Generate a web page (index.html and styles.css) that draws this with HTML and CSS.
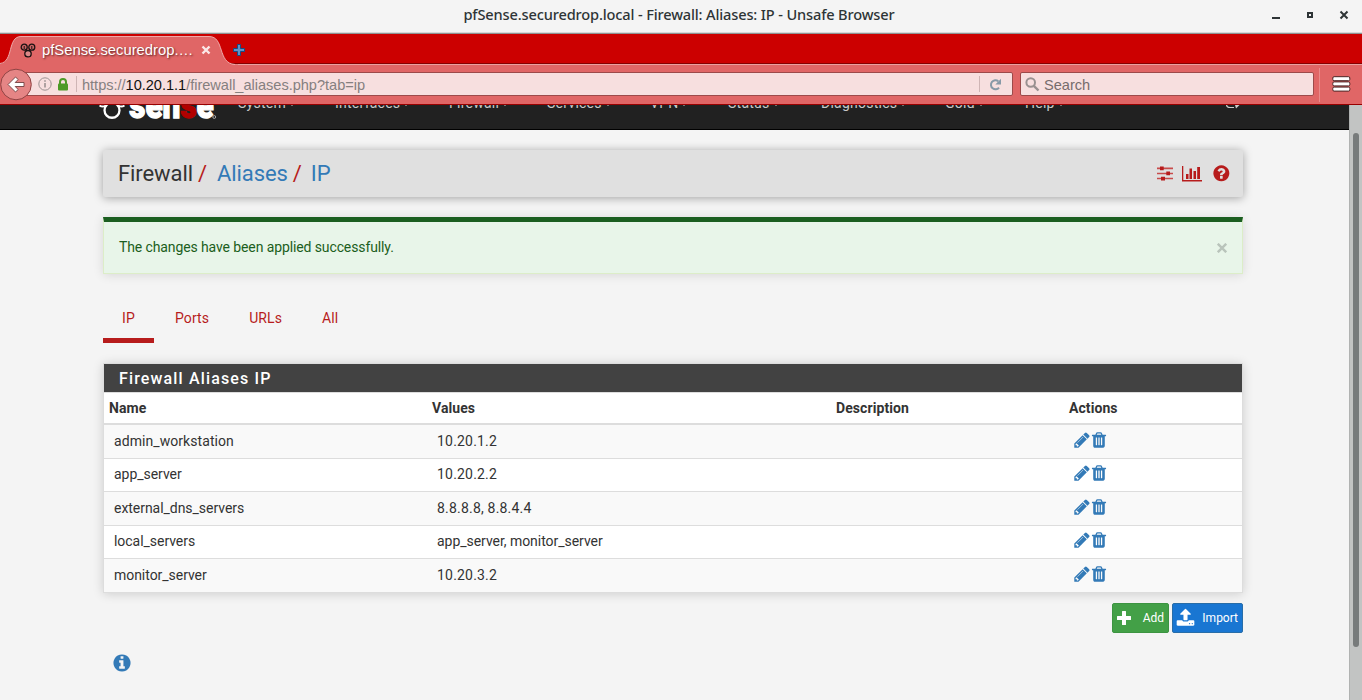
FILE: index.html
```
<!DOCTYPE html>
<html lang="en">
<head>
<meta charset="utf-8">
<title>pfSense.securedrop.local - Firewall: Aliases: IP</title>
<link rel="stylesheet" href="styles.css">
</head>
<body>
<svg class="defs" width="0" height="0">
  <symbol id="pencil" viewBox="0 0 1792 1792"><path d="M491 1536l91-91-235-235-91 91v107h128v128h107zm523-928q0-22-22-22-10 0-17 7l-542 542q-7 7-7 17 0 22 22 22 10 0 17-7l542-542q7-7 7-17zm-54-192l416 416-832 832h-416v-416zm683 96q0 53-37 90l-166 166-416-416 166-165q36-38 90-38 53 0 91 38l235 234q37 39 37 91z"/></symbol>
  <symbol id="trash" viewBox="0 0 1792 1792"><path d="M704 1376v-704q0-14-9-23t-23-9h-64q-14 0-23 9t-9 23v704q0 14 9 23t23 9h64q14 0 23-9t9-23zm256 0v-704q0-14-9-23t-23-9h-64q-14 0-23 9t-9 23v704q0 14 9 23t23 9h64q14 0 23-9t9-23zm256 0v-704q0-14-9-23t-23-9h-64q-14 0-23 9t-9 23v704q0 14 9 23t23 9h64q14 0 23-9t9-23zm-544-992h448l-48-117q-7-9-17-11h-317q-10 2-17 11zm928 32v64q0 14-9 23t-23 9h-96v948q0 83-47 143.5t-113 60.5h-832q-66 0-113-58.5t-47-141.5v-952h-96q-14 0-23-9t-9-23v-64q0-14 9-23t23-9h309l70-167q15-37 54-63t79-26h320q40 0 79 26t54 63l70 167h309q14 0 23 9t9 23z"/></symbol>
</svg>

<header class="titlebar">
  <div class="window-title">pfSense.securedrop.local - Firewall: Aliases: IP - Unsafe Browser</div>
  <svg class="window-buttons" width="80" height="14" viewBox="0 0 80 14" fill="none" stroke="#2e3436">
    <path d="M2 10h8" stroke-width="2"/><rect x="38" y="5" width="4" height="4" stroke-width="2"/>
    <path d="M70.5 3.500l7 7m0-7l-7 7" stroke-width="2"/>
  </svg>
</header>

<div class="tabstrip">
  <svg class="tab-shape" width="238" height="31" viewBox="0 0 238 31">
    <path class="tab-fill" d="M0 30C14 28 7 2.500 21 2.500H209C225 2.500 217 29.500 235 30.500H238V31H0Z"/>
    <path class="tab-edge" d="M0 29.500C14 28 7 2.500 21 2.500H209C225 2.500 217 29.500 235 30.500"/>
  </svg>
  <div class="tab-content">
    <svg width="16" height="15" viewBox="0 0 16 15" fill="#c66" stroke="#1b1111" stroke-width="1.300"><circle cx="4.200" cy="4.200" r="3"/><circle cx="11.800" cy="4.200" r="3"/><circle cx="8" cy="10.700" r="3.200" fill="#d88"/><path d="M4.200 3v3M11.800 3v3" stroke-width="1"/></svg>
    <span class="tab-title">pfSense.securedrop.…</span>
    <svg width="10" height="10" viewBox="0 0 10 10" stroke="#fbe9e9" stroke-width="2.400"><path d="M1.500 1.500l7 7m0-7l-7 7"/></svg>
  </div>
  <svg class="new-tab" width="12" height="12" viewBox="0 0 12 12"><path d="M4.500.5h3v4h4v3h-4v4h-3v-4h-4v-3h4z" fill="#5d94c9" stroke="#174b84"/></svg>
</div>

<div class="toolbar">
  <svg class="back" width="33" height="33" viewBox="0 0 33 33"><circle cx="16" cy="16.500" r="15.300" fill="#e58585" stroke="#8f4343"/><path d="M8 16.500l7.500-7.500 2.700 2.500-3 3H24v4h-8.800l3 3-2.700 2.500z" fill="#fff" stroke="#714040" stroke-width=".9"/></svg>
  <div class="urlbar">
    <svg width="14" height="14" viewBox="0 0 14 14" fill="none" stroke="#9c9292"><circle cx="7" cy="7" r="6.200"/><path d="M7 6v4.500M7 3.200v1.600" stroke-width="1.600"/></svg>
    <svg class="lock" width="12" height="13" viewBox="0 0 12 13"><path d="M3 6V4a3 3 0 016 0v2" fill="none" stroke="#4d9a26" stroke-width="2"/><rect x="1" y="5.500" width="10" height="7" rx="1" fill="#4d9a26"/></svg>
    <span class="divider"></span>
    <span class="url">https://<b>10.20.1.1</b>/firewall_aliases.php?tab=ip</span>
    <span class="divider"></span>
    <svg class="reload" width="13" height="13" viewBox="0 0 13 13"><path d="M10 9.600A4.500 4.500 0 119.300 3.300" fill="none" stroke="#8799a7" stroke-width="2"/><path d="M12 .8v5.700H6.300z" fill="#8799a7"/></svg>
  </div>
  <div class="search">
    <svg width="15" height="15" viewBox="0 0 15 15" fill="none" stroke="#999090"><circle cx="5.700" cy="5.500" r="4.300" stroke-width="2"/><path d="M8.800 8.800l4.700 4.700" stroke-width="2.400"/></svg>
    <span>Search</span>
  </div>
  <span class="tool-sep"></span>
  <svg class="menu" width="19" height="16" viewBox="0 0 19 16" fill="#fff" stroke="#4b2525"><rect x=".8" y=".7" width="17" height="4" rx="1.300"/><rect x=".8" y="5.900" width="17" height="4" rx="1.300"/><rect x=".8" y="11.100" width="17" height="4" rx="1.300"/></svg>
</div>

<div class="viewport">
  <div class="page">
    <nav class="navbar">
      <svg class="logo" width="124" height="25" viewBox="0 0 124 25">
        <circle cx="12" cy="5.500" r="7.800" fill="none" stroke="#fff" stroke-width="2.400"/>
        <path d="M-1 .5q3 2 6 .5M25 .5q-3 2-6 .5" fill="none" stroke="#fff" stroke-width="2"/>
        <text x="30" y="13.500" textLength="88" lengthAdjust="spacingAndGlyphs">sen<tspan class="red">s</tspan>e</text>
        <circle cx="118.500" cy="12.500" r="1.500" fill="none" stroke="#aaa"/>
      </svg>
      <ul class="nav-items">
        <li class="n-system">System</li><li class="n-interfaces">Interfaces</li><li class="n-firewall">Firewall</li><li class="n-services">Services</li><li class="n-vpn">VPN</li><li class="n-status">Status</li><li class="n-diagnostics">Diagnostics</li><li class="n-gold">Gold</li><li class="n-help">Help</li>
      </ul>
      <svg class="logout" width="15" height="5" viewBox="0 0 15 5"><path d="M.5 0Q1 2.500 4 2.500h4" fill="none" stroke="#ccc" stroke-width="1.200"/><path d="M9 0h4.500L10 3.500z" fill="#ccc"/></svg>
    </nav>

    <main class="container">
      <header class="page-header">
        <div class="crumbs"><span>Firewall</span><i>/</i><a>Aliases</a><i>/</i><a>IP</a></div>
        <div class="header-icons">
          <svg width="16" height="15" viewBox="0 0 16 15"><path d="M0 2.300h16M0 7.500h16M0 12.500h16" stroke="#c84b4b" stroke-width="1.700"/><path d="M3 .5h3.700v3.700H3zM9.300 5.600H13v3.700H9.300zM4 10.700h4v3.700H4z" fill="#b71c1c"/></svg>
          <svg class="bars" width="21" height="16" viewBox="0 0 21 16" fill="#b71c1c"><path d="M0 0h1.300v14H20v1.500H0zM4 8h2.500v5H4zM7.500 2.500H10V13H7.500zM11.500 5H14v8h-2.500zM15.200 1H18v12h-2.800z"/></svg>
          <svg width="18.700" height="18.700" viewBox="0 0 1792 1792" fill="#b71c1c"><path d="M1024 1376v-192q0-14-9-23t-23-9h-192q-14 0-23 9t-9 23v192q0 14 9 23t23 9h192q14 0 23-9t9-23zm256-672q0-88-55.500-163t-138.500-116-170-41q-243 0-371 213-15 24 8 42l132 100q7 6 19 6 16 0 25-12 53-68 86-92 34-24 86-24 48 0 85.500 26t37.500 59q0 38-20 61t-68 45q-63 28-115.500 86.500t-52.500 125.500v36q0 14 9 23t23 9h192q14 0 23-9t9-23q0-19 21.500-49.500t54.500-49.500q32-18 49-28.500t46-35 44.500-48 28-60.500 12.500-81zm384 192q0 209-103 385.500t-279.500 279.500-385.500 103-385.500-103-279.500-279.500-103-385.500 103-385.500 279.500-279.500 385.500-103 385.500 103 279.500 279.500 103 385.500z"/></svg>
        </div>
      </header>

      <div class="alert"><span>The changes have been applied successfully.</span><svg width="10" height="10" viewBox="0 0 9 9" stroke="#b9c4bb" stroke-width="2.200"><path d="M.7.700l7.600 7.600m0-7.600L.7 8.300"/></svg></div>

      <ul class="tabs"><li class="active">IP</li><li>Ports</li><li>URLs</li><li>All</li></ul>

      <section class="panel">
        <h2>Firewall Aliases IP</h2>
        <table>
          <colgroup><col class="c-name"><col class="c-values"><col class="c-desc"><col></colgroup>
          <thead><tr><th>Name</th><th>Values</th><th>Description</th><th>Actions</th></tr></thead>
          <tbody>
            <tr><td class="wide">admin_workstation</td><td class="num">10.20.1.2</td><td></td><td><svg class="ico"><use href="#pencil"/></svg><svg class="ico"><use href="#trash"/></svg></td></tr>
            <tr class="short"><td>app_server</td><td class="num">10.20.2.2</td><td></td><td><svg class="ico"><use href="#pencil"/></svg><svg class="ico"><use href="#trash"/></svg></td></tr>
            <tr><td>external_dns_servers</td><td class="num">8.8.8.8, 8.8.4.4</td><td></td><td><svg class="ico"><use href="#pencil"/></svg><svg class="ico"><use href="#trash"/></svg></td></tr>
            <tr class="short"><td>local_servers</td><td>app_server, monitor_server</td><td></td><td><svg class="ico"><use href="#pencil"/></svg><svg class="ico"><use href="#trash"/></svg></td></tr>
            <tr><td>monitor_server</td><td class="num">10.20.3.2</td><td></td><td><svg class="ico"><use href="#pencil"/></svg><svg class="ico"><use href="#trash"/></svg></td></tr>
          </tbody>
        </table>
      </section>

      <div class="actions">
        <button class="btn add"><svg width="14" height="14" viewBox="0 0 14 14" fill="#fff"><path d="M5 .5Q5 0 5.500 0h3q.5 0 .5.500V5h4.500q.5 0 .5.500v3q0 .5-.5.500H9v4.500q0 .5-.5.500h-3q-.5 0-.5-.5V9H.5Q0 9 0 8.500v-3Q0 5 .5 5H5z"/></svg><span>Add</span></button>
        <button class="btn import"><svg width="19" height="19" viewBox="0 0 1792 1792" fill="#fff"><path d="M1344 1472q0-26-19-45t-45-19-45 19-19 45 19 45 45 19 45-19 19-45zm256 0q0-26-19-45t-45-19-45 19-19 45 19 45 45 19 45-19 19-45zm128-224v320q0 40-28 68t-68 28h-1472q-40 0-68-28t-28-68v-320q0-40 28-68t68-28h427q21 56 70.500 92t110.500 36h256q61 0 110.500-36t70.500-92h427q40 0 68 28t28 68zm-325-648q-17 40-59 40h-256v448q0 26-19 45t-45 19h-256q-26 0-45-19t-19-45v-448h-256q-42 0-59-40-17-39 14-69l448-448q18-19 45-19t45 19l448 448q31 30 14 69z"/></svg><span>Import</span></button>
      </div>
      <svg class="info" width="20" height="20" viewBox="0 0 1792 1792" fill="#337ab7"><path d="M1152 1376v-160q0-14-9-23t-23-9h-96v-512q0-14-9-23t-23-9h-320q-14 0-23 9t-9 23v160q0 14 9 23t23 9h96v320h-96q-14 0-23 9t-9 23v160q0 14 9 23t23 9h448q14 0 23-9t9-23zm-128-896v-160q0-14-9-23t-23-9h-192q-14 0-23 9t-9 23v160q0 14 9 23t23 9h192q14 0 23-9t9-23zm640 416q0 209-103 385.500t-279.500 279.500-385.500 103-385.500-103-279.500-279.500-103-385.500 103-385.500 279.500-279.500 385.500-103 385.500 103 279.500 279.500 103 385.500z"/></svg>
    </main>
  </div>
  <div class="scrollbar"><div class="thumb"></div></div>
</div>
</body>
</html>
```

FILE: styles.css
```
* { box-sizing: border-box; }
body { margin: 0; width: 1362px; height: 700px; overflow: hidden; display: flex; flex-direction: column; background: #f4f4f4; font: 14px/20px Roboto, sans-serif; color: #333; }
svg { display: block; flex: none; }
ul { list-style: none; margin: 0; padding: 0; }
.defs { position: absolute; }

.titlebar { position: relative; height: 34px; flex: none; background: linear-gradient(#f4f4f4 32px, #d8d8d8 32px, #d8d8d8 33px, #8f9292 33px); display: flex; justify-content: flex-end; }
.window-title { position: absolute; left: 0; right: 4px; top: 4px; text-align: center; font: 500 14.600px/20px "Noto Sans", sans-serif; letter-spacing: -.15px; color: #2e3436; }
.window-buttons { margin: 8px 12px 0 0; }

.tabstrip { position: relative; height: 31px; flex: none; background: linear-gradient(#c00 29px, #840000 29px, #840000 30px, #eaa0a0 30px); display: flex; align-items: flex-start; }
.tab-shape { position: absolute; left: 0; top: 0; }
.tab-fill { fill: #e06666; }
.tab-edge { fill: none; stroke: #eeaaaa; }
.tab-content { position: relative; display: flex; align-items: center; margin: 6px 0 0 20px; height: 20px; width: 191px; color: #fff; }
.tab-title { font: 14.800px/20px "Liberation Sans", sans-serif; margin-left: 6px; width: 159px; white-space: nowrap; text-shadow: 1px 1px 2px #5a2222; }
.new-tab { margin: 10px 0 0 22px; }

.toolbar { position: relative; height: 40px; flex: none; background: #e06666; border-bottom: 1px solid #980000; display: flex; font: 14.600px/22px "Liberation Sans", sans-serif; }
.back { position: absolute; left: 0; top: 3px; }
.urlbar { margin: 7px 0 0 16px; width: 997px; height: 24px; border: 1px solid #9c4a4a; border-radius: 2px; background: #f7dfdf; display: flex; align-items: center; padding: 0 10px 0 21px; }
.lock { margin-left: 5px; }
.divider { width: 1px; height: 16px; background: #cfb5b5; margin-left: 7px; }
.url { flex: 1; margin-left: 5px; padding-top: 1px; color: #858080; letter-spacing: -.03px; }
.url b { font-weight: 400; color: #111; }
.reload { margin-left: 9px; }
.search { margin: 7px 0 0 7px; width: 294px; height: 24px; border: 1px solid #9c4a4a; border-radius: 2px; background: #f7dfdf; display: flex; align-items: center; gap: 4px; padding-left: 4px; color: #766c6c; }
.search span { padding-top: 1px; }
.tool-sep { width: 1px; height: 34px; margin: 3px 0 0 5px; background: #e98b8b; }
.menu { margin: 11px 0 0 12px; }

.viewport { flex: 1; display: flex; overflow: hidden; }
.page { width: 1349px; }
.navbar { height: 25px; background: #212121; border-bottom: 1px solid #000; display: flex; align-items: flex-start; overflow: hidden; padding-left: 98px; }
.logo { height: 24px; }
.logo text { font: 900 39px "Roboto", sans-serif; fill: #fff; stroke: #fff; stroke-width: 1.400px; }
.logo .red { fill: #b00000; stroke: #b00000; }
.nav-items { display: flex; width: 1004px; margin-left: 16px; color: #c8c8c8; letter-spacing: .25px; }
.nav-items li { line-height: 20px; margin-top: -12px; flex: none; white-space: nowrap; }
.nav-items li::after { content: ""; display: inline-block; margin-left: 3px; vertical-align: 2px; border: 3px solid transparent; border-top-color: #c8c8c8; border-bottom: 0; }
.n-system { width: 97px; }
.n-interfaces { width: 114px; }
.n-firewall { width: 98px; }
.n-services { width: 103px; }
.n-vpn { width: 78px; }
.n-status { width: 93px; }
.n-diagnostics { width: 124px; }
.n-gold { width: 80px; }
.n-help { width: 60px; }
.logout { margin-left: -16px; }

.container { width: 1140px; margin-left: 103px; padding-top: 20px; }
.page-header { height: 47px; background: #e0e0e0; border-radius: 2px; box-shadow: 0 1px 10px rgba(0,0,0,.35); display: flex; justify-content: space-between; align-items: center; padding: 0 12px 0 15px; }
.crumbs { font-size: 22px; line-height: 30px; display: flex; padding-top: 1px; letter-spacing: -.08px; }
.crumbs i { font-style: normal; color: #b71c1c; margin: 0 10px 0 5px; }
.crumbs i + a:last-child { margin-left: -1px; }
.crumbs a { color: #337ab7; }
.header-icons { display: flex; align-items: center; }
.bars { margin: 0 9px 0 9px; }

.alert { margin-top: 20px; height: 57px; border: 1px solid #dcedc8; border-top: 5px solid #1b5e20; background: #e8f5e9; color: #1b5e20; box-shadow: 0 1px 10px rgba(0,0,0,.12); display: flex; justify-content: space-between; align-items: center; padding: 0 15px 0 15px; letter-spacing: -.11px; }
.alert span { padding-bottom: 1px; }

.tabs { display: flex; margin-top: 24px; height: 45px; color: #b71c1c; }
.tabs li { height: 45px; padding: 10px 20px 0; letter-spacing: .1px; }
.tabs .active { width: 51px; padding-left: 19px; border-bottom: 5px solid #b71c1c; margin-right: 1px; }

.panel { margin-top: 20px; border: 1px solid #ddd; box-shadow: 0 1px 10px rgba(0,0,0,.16); background: #fff; }
.panel h2 { margin: 0; height: 28px; background: #424242; color: #fff; font-size: 16px; font-weight: 500; line-height: 29px; letter-spacing: 1.150px; padding-left: 15px; }
table { width: 100%; table-layout: fixed; border-collapse: separate; border-spacing: 0; }
.c-name { width: 323px; }
.c-values { width: 404px; }
.c-desc { width: 233px; }
th { height: 33px; border-top: 1px solid #ddd; border-bottom: 2px solid #ddd; padding: 0 5px 1px; text-align: left; font-weight: 700; letter-spacing: .08px; }
td { height: 34px; border-bottom: 1px solid #ddd; padding: 0 10px 2px; letter-spacing: -.04px; }
.short td { height: 33px; }
td.wide { letter-spacing: .07px; }
td.num { letter-spacing: .2px; }
tbody tr:nth-child(odd) { background: #f9f9f9; }
tbody tr:last-child td { height: 33px; border-bottom: 0; padding-bottom: 1px; }
.ico { display: inline-block; width: 18px; height: 18px; fill: #337ab7; vertical-align: middle; margin: -4px 1px 0 -1px; }
.ico + .ico { margin-left: -2px; }

.actions { display: flex; justify-content: flex-end; gap: 3px; margin-top: 10px; }
.btn { height: 30px; border: 1px solid #43a047; border-radius: 2px; color: #fff; font: 12px/18px Roboto, sans-serif; display: flex; align-items: center; padding: 0 4px; justify-content: space-between; }
.add { width: 57px; background: #43a047; border-color: #3c9441; }
.import { width: 71px; background: #1976d2; border-color: #286da8; padding-left: 3px; }
.import svg { margin-bottom: 2px; }
.info { margin: 20px 0 0 9px; }

.scrollbar { width: 13px; background: #c2c4c3; border-left: 1px solid #b0b2b1; padding: 28px 3px 0; }
.thumb { width: 6px; height: 514px; border-radius: 3px; background: #777b7b; }
```
